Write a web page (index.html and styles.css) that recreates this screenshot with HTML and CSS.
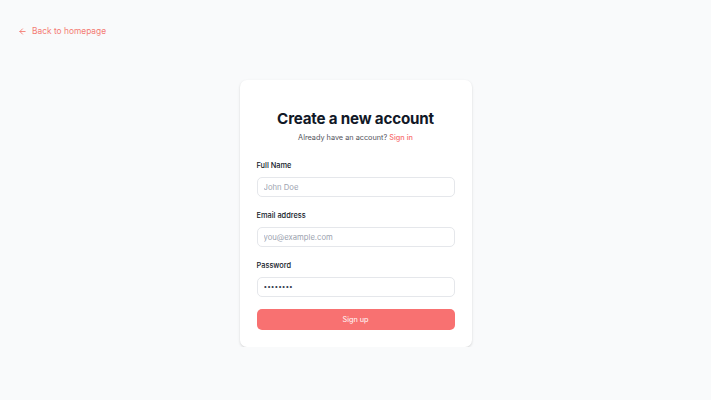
FILE: index.html
```html
<!DOCTYPE html>
<html lang="en">
<head>
    <meta charset="UTF-8">
    <meta name="viewport" content="width=device-width, initial-scale=1.0">
    <title>Sign up</title>
    <link rel="stylesheet" href="styles.css">
</head>
<body>
    <div class="top">
        <a href="#" class="back-link">
            <svg width="9" height="9" viewBox="0 0 24 24" fill="none" stroke="currentColor" stroke-width="2.4" stroke-linecap="round" stroke-linejoin="round">
                <path d="M19 12H5"/>
                <path d="M12 19l-7-7 7-7"/>
            </svg>
            Back to homepage
        </a>
    </div>

    <div class="card">
        <h2>Create a new account</h2>
        <p class="sub">Already have an account? <a href="#">Sign in</a></p>

        <form>
            <label for="name">Full Name</label>
            <input type="text" id="name" placeholder="John Doe">

            <label for="email">Email address</label>
            <input type="email" id="email" placeholder="you@example.com">

            <label for="password">Password</label>
            <input type="password" id="password" value="password">

            <button type="submit">Sign up</button>
        </form>
    </div>
</body>
</html>
```

FILE: styles.css
```css
* {
    box-sizing: border-box;
}
body {
    margin: 0;
    font-family: Inter, "Noto Sans", sans-serif;
    background-color: #f9fafb;
    color: #111827;
}
.top {
    display: flex;
    padding: 24px 18px 0;
}
.back-link {
    display: flex;
    align-items: center;
    gap: 5px;
    font-size: 8.4px;
    line-height: 14px;
    color: #f47c74;
    text-decoration: none;
}
.card {
    width: 232px;
    margin: 42px auto 0;
    padding: 28px 17px 17px;
    background-color: #fff;
    border-radius: 7px;
    box-shadow: 0 1px 3px rgba(0, 0, 0, 0.1), 0 1px 2px rgba(0, 0, 0, 0.06);
}
h2 {
    margin: 0;
    font-size: 15.2px;
    line-height: 22px;
    font-weight: 700;
    text-align: center;
    letter-spacing: -0.2px;
    color: #111827;
}
.sub {
    margin: 2px 0 0;
    font-size: 7.3px;
    line-height: 12px;
    text-align: center;
    color: #52525b;
}
.sub a {
    color: #f87171;
    font-weight: 500;
    text-decoration: none;
}
form {
    margin-top: 16px;
}
label {
    display: block;
    font-size: 7.4px;
    line-height: 12px;
    font-weight: 500;
    color: #111827;
}
input {
    display: block;
    width: 100%;
    height: 20px;
    margin: 5px 0 13px;
    padding: 0 6px;
    font-family: inherit;
    font-size: 7.7px;
    color: #374151;
    border: 1px solid #e5e7eb;
    border-radius: 5px;
    background: #fff;
    outline: none;
}
input::placeholder {
    color: #9ca3af;
}
input[type="password"] {
    margin-bottom: 12px;
    font-size: 6.5px;
}
button[type="submit"] {
    display: block;
    width: 100%;
    height: 21px;
    font-family: inherit;
    font-size: 7.3px;
    color: #fff;
    background-color: #f87171;
    border: none;
    border-radius: 5px;
    cursor: pointer;
}
```
